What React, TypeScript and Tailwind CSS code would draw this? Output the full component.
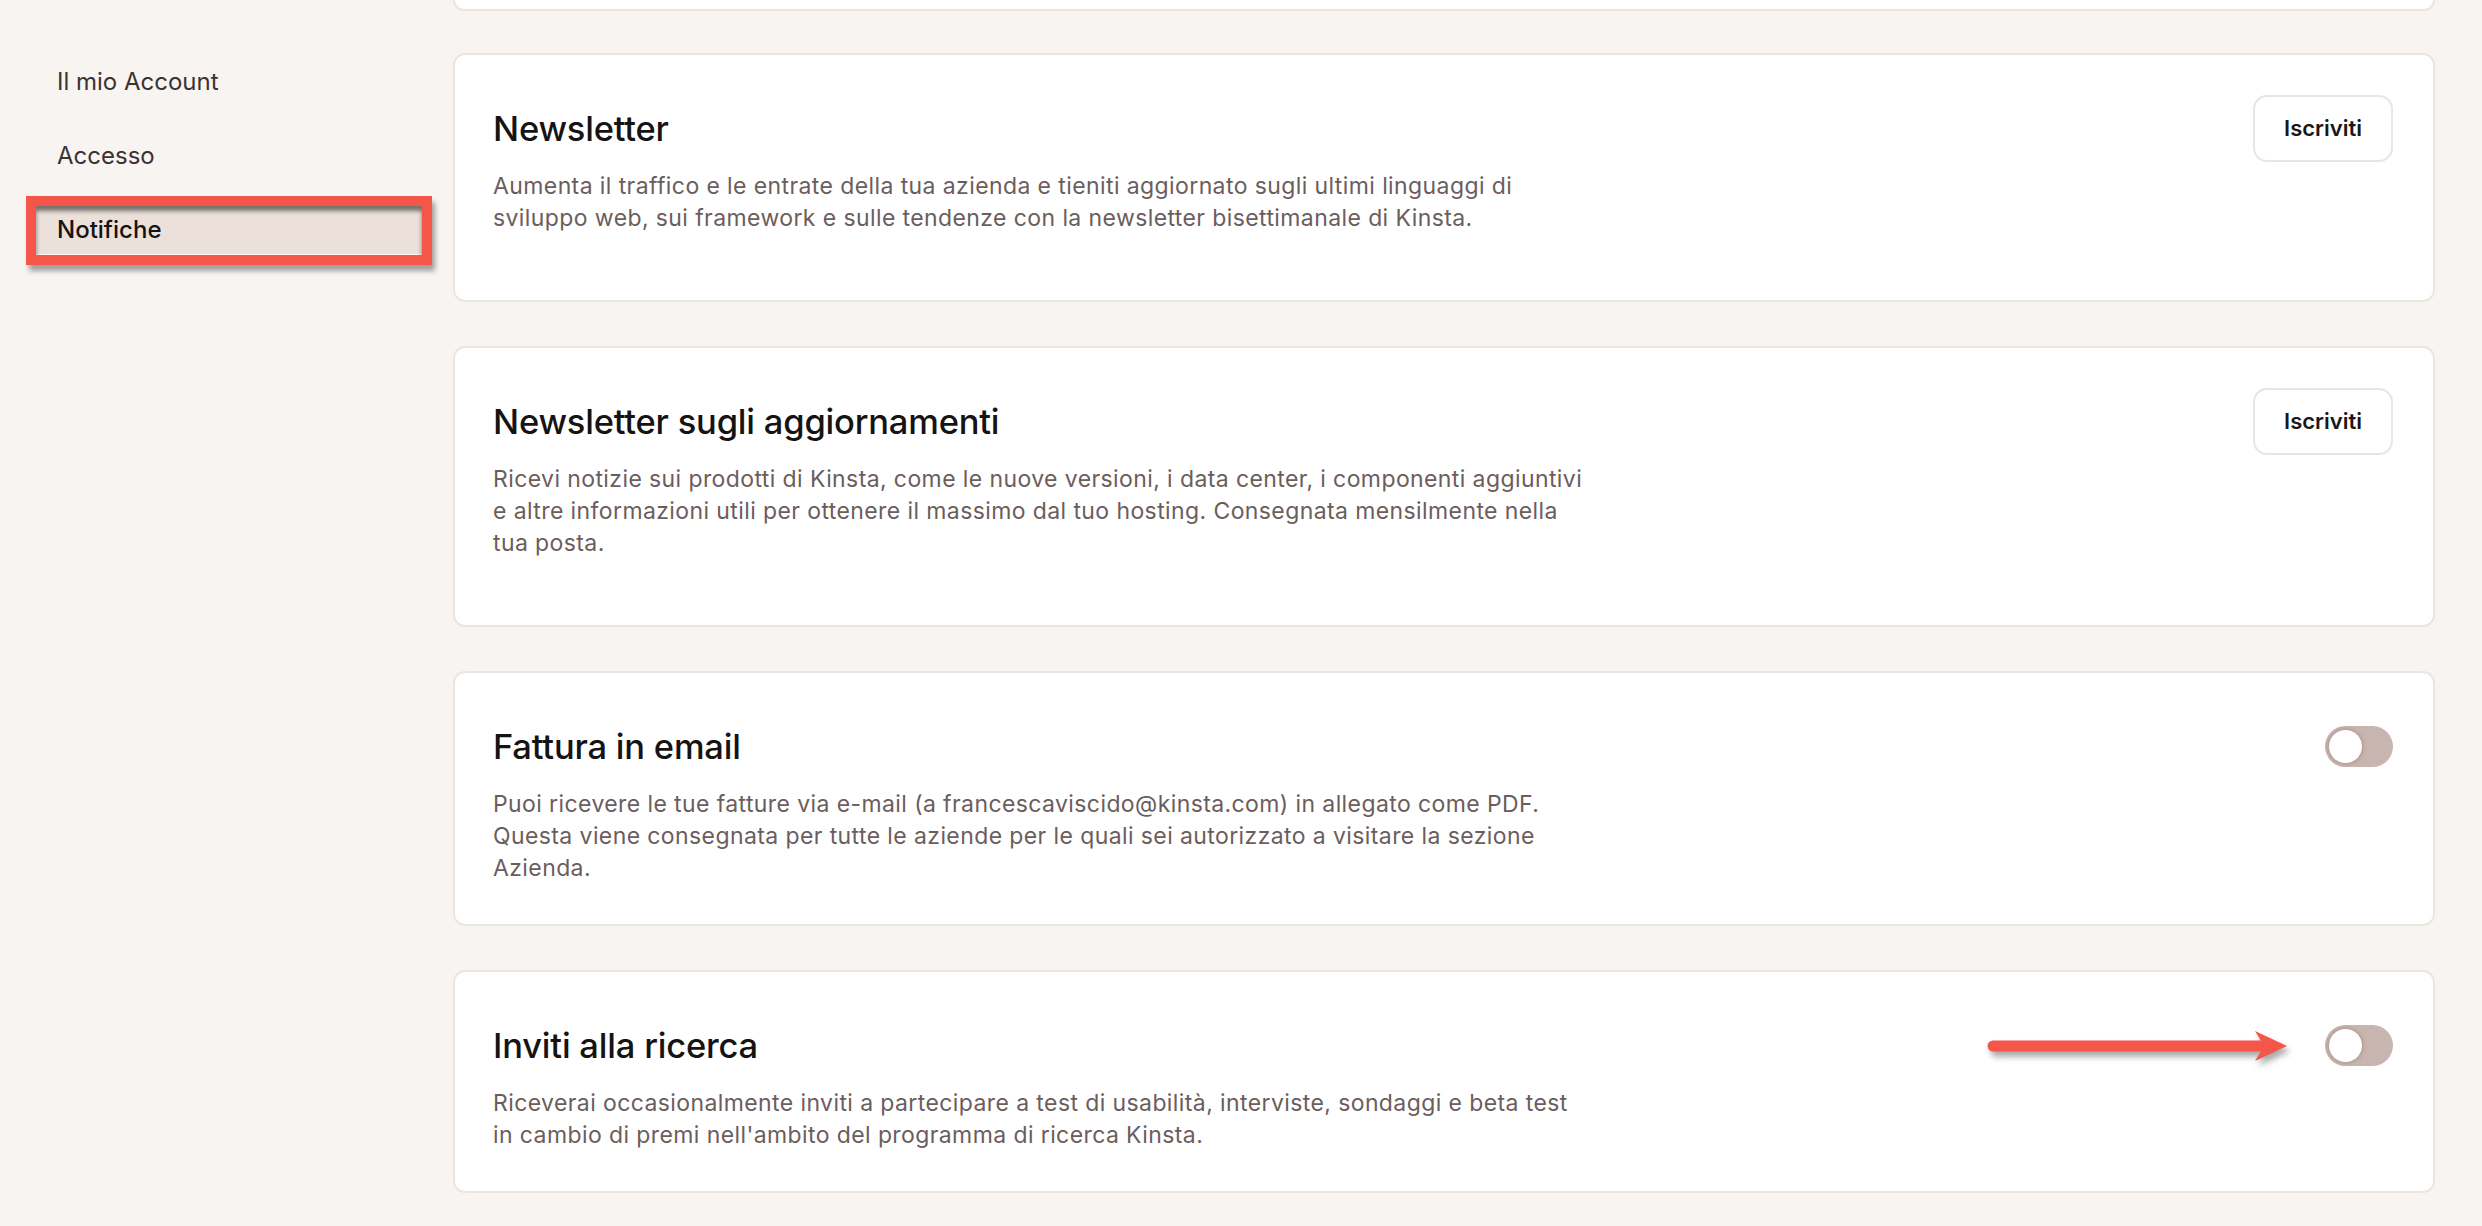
import React from 'react';

// Impostazioni utente › Notifiche (MyKinsta)
type Row = {
  title: string;
  lines: string[];
  action: 'button' | 'toggle';
  arrow?: boolean;
};

const ROWS: Row[] = [
  {
    title: 'Newsletter',
    lines: [
      'Aumenta il traffico e le entrate della tua azienda e tieniti aggiornato sugli ultimi linguaggi di',
      'sviluppo web, sui framework e sulle tendenze con la newsletter bisettimanale di Kinsta.',
    ],
    action: 'button',
  },
  {
    title: 'Newsletter sugli aggiornamenti',
    lines: [
      'Ricevi notizie sui prodotti di Kinsta, come le nuove versioni, i data center, i componenti aggiuntivi',
      'e altre informazioni utili per ottenere il massimo dal tuo hosting. Consegnata mensilmente nella',
      'tua posta.',
    ],
    action: 'button',
  },
  {
    title: 'Fattura in email',
    lines: [
      'Puoi ricevere le tue fatture via e-mail (a francescaviscido@kinsta.com) in allegato come PDF.',
      'Questa viene consegnata per tutte le aziende per le quali sei autorizzato a visitare la sezione',
      'Azienda.',
    ],
    action: 'toggle',
  },
  {
    title: 'Inviti alla ricerca',
    lines: [
      'Riceverai occasionalmente inviti a partecipare a test di usabilità, interviste, sondaggi e beta test',
      "in cambio di premi nell'ambito del programma di ricerca Kinsta.",
    ],
    action: 'toggle',
    arrow: true,
  },
];

const Toggle: React.FC = () => (
  <span className="flex items-center w-[68px] h-[41px] rounded-full bg-[#c8b5af] px-[4px]">
    <span className="w-[33px] h-[33px] rounded-full bg-white shadow-[0_0_3px_2px_rgba(150,120,115,0.35)]" />
  </span>
);

const Arrow: React.FC = () => (
  <svg width="310" height="50" viewBox="0 0 310 50" className="drop-shadow-[3px_5px_3px_rgba(0,0,0,0.35)]">
    <line x1="12" y1="25" x2="280" y2="25" stroke="#f4564a" strokeWidth="11" strokeLinecap="round" />
    <polygon points="274,10 306,25 274,40 283,25" fill="#f4564a" />
  </svg>
);

const Card: React.FC<{ row: Row }> = ({ row }) => (
  <div
    className={`bg-white border-2 border-[#ece6e1] rounded-xl pl-[38px] pr-[40px] pt-[40px] ${
      row.action === 'button' ? 'pb-[66px]' : 'pb-[40px]'
    }`}
  >
    <div className="flex items-center justify-between h-[67px]">
      <h2 className="text-[34.5px] font-medium text-[#161313] leading-[40px] tracking-[-0.2px]">{row.title}</h2>
      {row.action === 'button' ? (
        <button className="w-[140px] h-[67px] rounded-[14px] border-2 border-[#ece4e0] bg-white text-[22px] font-semibold text-[#1b1717]">
          Iscriviti
        </button>
      ) : (
        <div className="flex items-center gap-[34px]">
          {row.arrow && <Arrow />}
          <Toggle />
        </div>
      )}
    </div>
    <p className="mt-[8px] text-[23px] leading-[32px] tracking-[0.4px] text-[#6c5d5d]">
      {row.lines.map((l, i) => (
        <span key={i} className="block whitespace-nowrap">{l}</span>
      ))}
    </p>
  </div>
);

export default function App() {
  return (
    <div className="min-h-[1226px] w-[2482px] bg-[#f7f4f1] font-['Inter',sans-serif] flex">
      {/* menu laterale */}
      <aside className="w-[453px] shrink-0 pt-[58px]">
        <nav className="flex flex-col gap-[26px] pl-[36px] pr-[31px]">
          <a className="h-[48px] flex items-center px-[21px] text-[24px] text-[#3b3232]">Il mio Account</a>
          <a className="h-[48px] flex items-center px-[21px] text-[24px] text-[#3b3232]">Accesso</a>
          <div className="relative">
            <a className="h-[48px] flex items-center px-[21px] text-[24px] font-medium text-[#171212] bg-[#ebe1da]">Notifiche</a>
            <span className="absolute -left-[10px] -right-[10px] -top-[10px] -bottom-[11px] border-[10px] border-[#f4574a] shadow-[inset_0_5px_4px_rgba(0,0,0,0.5),3px_6px_5px_rgba(0,0,0,0.35)]" />
          </div>
        </nav>
      </aside>

      {/* contenuto */}
      <main className="w-[1982px] shrink-0 pb-[37px]">
        <div className="h-[11px] bg-white border-2 border-t-0 border-[#ece6e1] rounded-b-xl" />
        <div className="mt-[42px] flex flex-col gap-[44px]">
          {ROWS.map(r => (
            <Card key={r.title} row={r} />
          ))}
        </div>
      </main>
    </div>
  );
}
